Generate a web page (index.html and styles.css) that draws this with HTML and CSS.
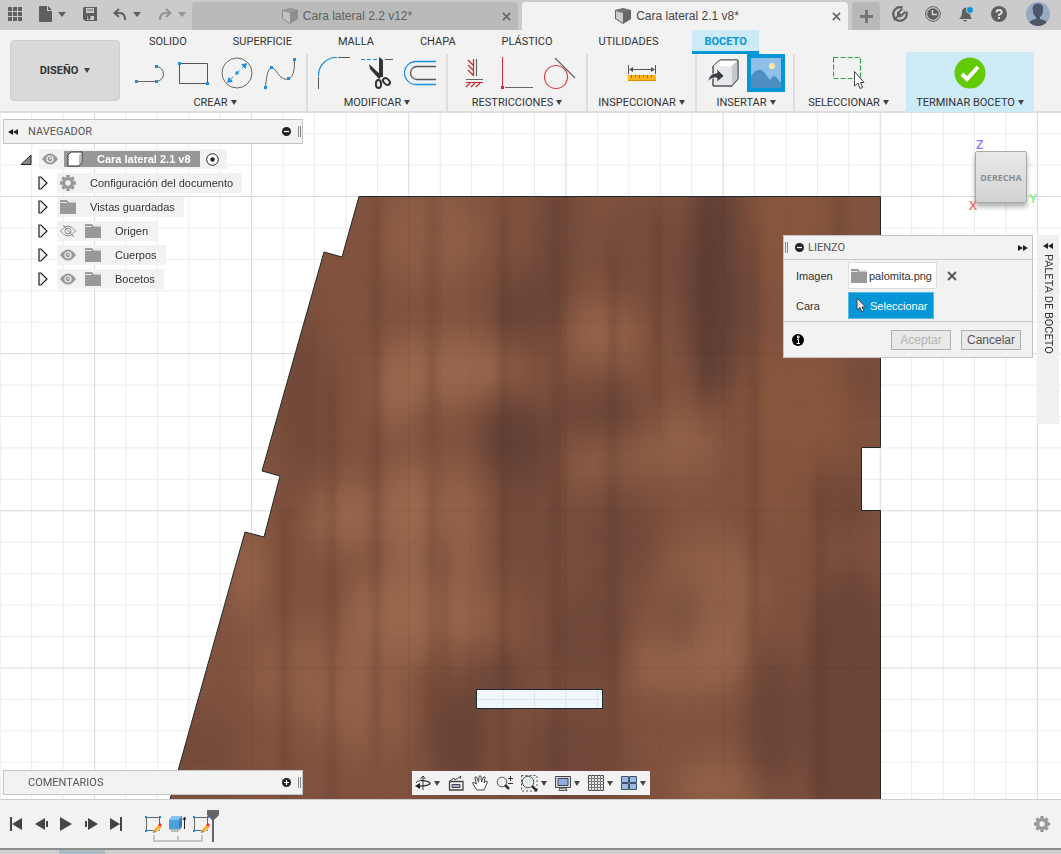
FILE: index.html
```html
<!DOCTYPE html>
<html lang="es">

<head>
    <meta charset="UTF-8">
    <meta name="viewport" content="width=device-width, initial-scale=1.0">
    <title>Cara lateral 2.1 v8*</title>
    <link rel="stylesheet" href="styles.css">
</head>

<body>
    <!-- Shared icons -->
    <svg class="sprite" width="0" height="0" aria-hidden="true">
        <symbol id="eye" viewBox="0 0 16 12">
            <path d="M0 6Q8-5 16 6Q8 17 0 6Z" fill="#999" />
            <circle cx="8" cy="6" r="3.6" fill="#f2f2f2" />
            <circle cx="8" cy="6" r="2.4" fill="#999" />
            <circle cx="8.500" cy="5.500" r="1" fill="#f2f2f2" />
        </symbol>
        <symbol id="folder" viewBox="0 0 16 14">
            <path d="M0 0h7l2 2.500h7V14H0Z" fill="#999" />
            <path d="M0 2.500h7M8 1h8" stroke="#e4e4e4" />
        </symbol>
        <symbol id="gear" viewBox="-8 -8 16 16">
            <circle r="4.400" fill="none" stroke="#999" stroke-width="3.400" />
            <path d="M0-8V-5M0 5V8M-8 0H-5M5 0H8M-5.600-5.600L-3.800-3.800M5.600-5.600L3.800-3.800M-5.600 5.600L-3.800 3.800M5.600 5.600L3.800 3.800" stroke="#999" stroke-width="3.400" />
        </symbol>
        <symbol id="expand" viewBox="0 0 10 14">
            <path d="M1 1h2l6 6l-6 6H1Z" fill="#eee" stroke="#222" stroke-width="1.200" />
        </symbol>
        <symbol id="cross" viewBox="0 0 10 10">
            <path d="M1 1L9 9M9 1L1 9" stroke="currentColor" stroke-width="1.800" />
        </symbol>
        <symbol id="rewind" viewBox="0 0 10 6">
            <path d="M5 0V6L0 3ZM10 0V6L5 3Z" fill="#222" />
        </symbol>
        <symbol id="sketch" viewBox="0 0 17 17">
            <path d="M1.500 1.500H14.500V14.500H1.500Z" fill="none" stroke="#666" />
            <path d="M0 0h2v2H0ZM14 0h2v2h-2ZM0 14h2v2H0Z" fill="#1b8fe0" />
            <path d="M8 17l1-4l5-5l3 3l-5 5Z" fill="#f7b63d" stroke="#f2f2f2" stroke-width=".6" />
            <path d="M13 9l2-2l2 2l-1.500 2Z" fill="#e6394a" />
            <path d="M8 17l1-3l2 2Z" fill="#777" />
        </symbol>
        <symbol id="part" viewBox="0 0 16 16">
            <path d="M0 2L8 0L16 2V11L8 16L0 11Z" fill="#666" />
            <path d="M1 3L8 5V15L1 10.500Z" fill="#ccc" />
            <path d="M1 2.500L8 .5L15 2.500L8 4.500Z" fill="#777" />
        </symbol>
    </svg>

    <header class="topbar">
        <div class="quick">
            <button class="icon-btn" aria-label="Panel de datos">
                <svg width="14" height="14" fill="#5f5f5f"><path d="M0 0h4v4H0ZM5 0h4v4H5ZM10 0h4v4h-4ZM0 5h4v4H0ZM5 5h4v4H5ZM10 5h4v4h-4ZM0 10h4v4H0ZM5 10h4v4H5ZM10 10h4v4h-4Z" /></svg>
            </button>
            <button class="icon-btn" aria-label="Archivo">
                <svg width="13" height="16" fill="#5f5f5f"><path d="M1 0h7v5h5v10a1 1 0 0 1-1 1H1a1 1 0 0 1-1-1V1a1 1 0 0 1 1-1ZM9 0l4 4H9Z" /></svg>
                <span class="caret"></span>
            </button>
            <button class="icon-btn" aria-label="Guardar">
                <svg width="14" height="14"><path d="M1 0H14V14H2L0 12V1Z" fill="#5f5f5f" /><path d="M3 1h8v5H3ZM4 9h7v4H4Z" fill="#cbcbcb" /><path d="M4 3h6M5 9h2v3H5Z" stroke="#5f5f5f" fill="#5f5f5f" /></svg>
            </button>
            <button class="icon-btn" aria-label="Deshacer">
                <svg width="14" height="13" fill="none" stroke="#5f5f5f" stroke-width="2"><path d="M6 1L1.500 5L6 9M2 5h5q5 0 5 7" /></svg>
                <span class="caret"></span>
            </button>
            <button class="icon-btn faded" aria-label="Rehacer">
                <svg width="14" height="13" fill="none" stroke="#5f5f5f" stroke-width="2"><path d="M8 1l4.500 4L8 9M12 5H7Q2 5 2 12" /></svg>
                <span class="caret"></span>
            </button>
        </div>
        <nav class="docs">
            <div class="doc">
                <a href="#doc22"><svg class="faded" width="16" height="16"><use href="#part" /></svg>Cara lateral 2.2 v12*</a>
                <button class="close" aria-label="Cerrar 2.2"><svg width="9" height="9"><use href="#cross" /></svg></button>
            </div>
            <div class="doc active">
                <a href="#doc21"><svg width="16" height="16"><use href="#part" /></svg>Cara lateral 2.1 v8*</a>
                <button class="close" aria-label="Cerrar 2.1"><svg width="9" height="9"><use href="#cross" /></svg></button>
            </div>
            <button class="new-doc" aria-label="Nuevo"><svg width="13" height="13"><path d="M5 0h3v5h5v3H8v5H5V8H0V5h5Z" fill="#777" /></svg></button>
        </nav>
        <div class="account">
            <button class="icon-btn" aria-label="Extensiones">
                <svg width="16" height="16"><circle cx="8" cy="8" r="6.800" fill="none" stroke="#5f5f5f" stroke-width="2.200" /><path d="M1 13L5 10Q4 7 6 5L11 10Q8 12 6 11L3 15Z" fill="#5f5f5f" /><path d="M7 6l3-3M10 9l3-3" stroke="#5f5f5f" stroke-width="1.800" /><path d="M11 1l4 4" stroke="#cbcbcb" stroke-width="3" /></svg>
            </button>
            <button class="icon-btn" aria-label="Estado del trabajo">
                <svg width="16" height="16"><circle cx="8" cy="8" r="7.400" fill="none" stroke="#5f5f5f" /><circle cx="8" cy="8" r="5.800" fill="#5f5f5f" /><path d="M7.500 4v4.500H12" stroke="#d5d5d5" stroke-width="1.500" fill="none" /></svg>
            </button>
            <button class="icon-btn" aria-label="Notificaciones">
                <svg width="16" height="16"><path d="M1 13q3-2 3-7q0-4 4-4.500q4 .5 4 4.500q0 5 2 7ZM5 14h4q-2 3-4 0Z" fill="#5f5f5f" /><circle cx="12" cy="4" r="3.500" fill="#0696d7" stroke="#cbcbcb" /></svg>
            </button>
            <button class="icon-btn" aria-label="Ayuda">
                <svg width="16" height="16"><circle cx="8" cy="8" r="8" fill="#5f5f5f" /><path d="M5.500 6.500Q5.500 4 8 4Q10.700 4 10.700 6.200Q10.700 7.600 8 8.800V10M8 11v2" stroke="#e0e0e0" stroke-width="1.900" fill="none" /></svg>
            </button>
            <button class="icon-btn avatar" aria-label="Perfil">
                <svg width="24" height="24"><circle cx="12" cy="12" r="12" fill="#98a9c4" /><path d="M3 20q2-2 7-3v-2Q7 13 7 9Q5 2 12 1.500Q18 2 17 8Q17 13 14 15v2q5 1 7 3q-4 4-9 4T3 20Z" fill="#4b5668" /></svg>
            </button>
        </div>
    </header>

    <section class="ribbon">
        <button class="workspace">DISEÑO <span class="caret"></span></button>
        <div class="ribbon-main">
            <nav class="tabs">
                <a href="#solido">SOLIDO</a>
                <a href="#superficie">SUPERFICIE</a>
                <a href="#malla">MALLA</a>
                <a href="#chapa">CHAPA</a>
                <a href="#plastico">PLÁSTICO</a>
                <a href="#utilidades">UTILIDADES</a>
                <a href="#boceto" class="current">BOCETO</a>
            </nav>
            <div class="groups">
                <div class="group">
                    <div class="tools">
                        <button class="icon-btn" aria-label="Línea">
                            <svg width="32" height="32" fill="none"><path d="M2 24.500H21M21 9.500a7.500 7.500 0 0 1 0 15" stroke="#666" /><path d="M0 23h3v3H0ZM20 23h3v3h-3ZM20 8h3v3h-3Z" fill="#1b8fe0" /></svg>
                        </button>
                        <button class="icon-btn" aria-label="Rectángulo">
                            <svg width="32" height="32" fill="none"><path d="M1.500 6.500H29.500V26.500H1.500Z" stroke="#555" /><path d="M0 5h3v3H0ZM28 25h3v3h-3Z" fill="#1b8fe0" /></svg>
                        </button>
                        <button class="icon-btn" aria-label="Círculo">
                            <svg width="32" height="32" fill="none"><circle cx="16" cy="16" r="15" stroke="#666" /><path d="M8 24L24 8" stroke="#1b8fe0" stroke-dasharray="6 3" /><path d="M14.500 14.500h3v3h-3ZM6 26l1.500-6l4.500 4.500ZM26 6l-6 1.500l4.500 4.500Z" fill="#1b8fe0" /></svg>
                        </button>
                        <button class="icon-btn" aria-label="Spline">
                            <svg width="32" height="32" fill="none"><path d="M1.500 30Q3 11 7 11Q10 10 14 17Q20 24 25 22Q31 19 30.500 3" stroke="#666" /><path d="M0 29h3v3H0ZM6 9h3v3H6ZM23 20h3v3h-3ZM29 1h3v3h-3Z" fill="#1b8fe0" /></svg>
                        </button>
                    </div>
                    <button class="group-name">CREAR<span class="caret"></span></button>
                </div>
                <div class="group">
                    <div class="tools">
                        <button class="icon-btn" aria-label="Empalme">
                            <svg width="32" height="32" fill="none"><path d="M.5 19A18 18 0 0 1 19 .5" stroke="#1b8fe0" stroke-width="1.200" /><path d="M20 .5H32M.5 20V32" stroke="#555" /></svg>
                        </button>
                        <button class="icon-btn" aria-label="Recortar">
                            <svg width="32" height="32" fill="none"><path d="M0 2.500H18" stroke="#1b8fe0" stroke-dasharray="4 2" /><path d="M24 2.500H32" stroke="#555" /><path d="M8 7L21 19L18 22L9 12ZM18 0L22 3V20H18Z" fill="#333" /><ellipse cx="17.500" cy="27" rx="2.600" ry="4" stroke="#333" stroke-width="2" /><ellipse cx="25.500" cy="24.500" rx="2.600" ry="4" transform="rotate(-45 25.500 24.500)" stroke="#333" stroke-width="2" /></svg>
                        </button>
                        <button class="icon-btn" aria-label="Desfase">
                            <svg width="32" height="32" fill="none"><path d="M32 4.500H12a11.500 11.500 0 0 0 0 23H32" stroke="#1b8fe0" stroke-width="1.300" /><path d="M32 9.500H13a6.500 6.500 0 0 0 0 13H32" stroke="#555" stroke-width="1.300" /></svg>
                        </button>
                    </div>
                    <button class="group-name">MODIFICAR<span class="caret"></span></button>
                </div>
                <div class="group">
                    <div class="tools">
                        <button class="icon-btn" aria-label="Horizontal o vertical">
                            <svg width="32" height="32" fill="none"><path d="M15.500 2V19M10 3l5 5M10 8l5 5M10 13l5 5M8 25.500H25M8 30l4-4M13 30l4-4M18 30l4-4" stroke="#c3272e" stroke-width="1.200" /><path d="M18.500 2V19M8 22.500H25" stroke="#666" stroke-width="1.200" /></svg>
                        </button>
                        <button class="icon-btn" aria-label="Perpendicular">
                            <svg width="32" height="32" fill="none"><path d="M1.500 0V29" stroke="#d32b33" /><path d="M4 30.500H32" stroke="#666" /><path d="M0 29h3v3H0Z" fill="#d32b33" /></svg>
                        </button>
                        <button class="icon-btn" aria-label="Tangente">
                            <svg width="32" height="32" fill="none"><circle cx="12" cy="20" r="11.500" stroke="#d84449" stroke-width="1.200" /><path d="M11 1L31 21" stroke="#666" stroke-width="1.200" /></svg>
                        </button>
                    </div>
                    <button class="group-name">RESTRICCIONES<span class="caret"></span></button>
                </div>
                <div class="group">
                    <div class="tools">
                        <button class="icon-btn" aria-label="Medir">
                            <svg width="28" height="32"><path d="M.5 8V17M27.500 8V17M2 12.500H26" stroke="#555" /><path d="M1 12.500l4-2.500v5ZM27 12.500l-4-2.500v5Z" fill="#555" /><path d="M0 18H28V24H0Z" fill="#fdb515" /><path d="M0 23.500H28" stroke="#dc9100" /><path d="M3.500 18v3M7.500 18v2M11.500 18v3M15.500 18v2M19.500 18v3M23.500 18v2" stroke="#8f6518" /></svg>
                        </button>
                    </div>
                    <button class="group-name">INSPECCIONAR<span class="caret"></span></button>
                </div>
                <div class="group insert">
                    <div class="tools">
                        <button class="icon-btn" aria-label="Insertar">
                            <svg width="32" height="32"><path d="M5 9L12 3H30V22L24 29H5Z" fill="#e6e8eb" stroke="#555" /><path d="M5 9L12 3H30L24 9Z" fill="#fff" /><path d="M24 9V29L30 22V3Z" fill="#c4c8ce" /><path d="M5 9L12 3H30V22L24 29H5Z" fill="none" stroke="#555" /><path d="M0 25Q1 16 9 16V12L16 19L9 25V21Q3 20 0 25Z" fill="#3b3f43" stroke="#f2f2f2" stroke-width=".7" /></svg>
                        </button>
                        <button class="icon-btn canvas-tool" aria-label="Lienzo">
                            <svg width="30" height="30"><path d="M0 0H30V30H0Z" fill="#8fc0e8" /><path d="M0 18Q7 8 13 14L19 22Q23 15 26 20L30 25V30H0Z" fill="#4d8fc2" /><circle cx="21" cy="8" r="3" fill="#ffe9a0" /></svg>
                        </button>
                    </div>
                    <button class="group-name">INSERTAR<span class="caret"></span></button>
                </div>
                <div class="group">
                    <div class="tools">
                        <button class="icon-btn" aria-label="Seleccionar">
                            <svg width="32" height="32" fill="none"><path d="M.5 .5H27.500V21.500H.5Z" stroke="#27a74a" stroke-width="1.200" stroke-dasharray="5 2" /><path d="M21.500 14.500V29L25 26L27 31.500L29.500 30.500L27.500 25.500H31Z" fill="#fff" stroke="#444" /></svg>
                        </button>
                    </div>
                    <button class="group-name">SELECCIONAR<span class="caret"></span></button>
                </div>
                <div class="group finish">
                    <div class="tools">
                        <button class="icon-btn" aria-label="Terminar">
                            <svg width="32" height="32" fill="none"><circle cx="16" cy="16" r="15.500" fill="#63ca06" /><path d="M8 17L13 22L24 10" stroke="#fff" stroke-width="4" /></svg>
                        </button>
                    </div>
                    <button class="group-name">TERMINAR BOCETO<span class="caret"></span></button>
                </div>
            </div>
        </div>
    </section>

    <main class="viewport">
        <!-- Model: wooden side panel over the sketch grid -->
        <svg class="model" width="100%" height="100%">
            <defs>
                <pattern id="minor" x="94" y="83" width="31.430" height="31.430" patternUnits="userSpaceOnUse">
                    <path d="M.5 0V32M0 .5H32" stroke="#000" stroke-opacity=".08" />
                </pattern>
                <pattern id="major" x="94" y="83" width="157.150" height="157.150" patternUnits="userSpaceOnUse">
                    <path d="M.5 0V158M0 .5H158" stroke="#000" stroke-opacity=".08" />
                </pattern>
                <clipPath id="outline">
                    <path d="M359 83H880V334H861V397H880V1132H45L245 419L264 424L280 363L262 358L324 139L342 144Z" />
                </clipPath>
                <filter id="soft" x="-50%" y="-50%" width="200%" height="200%" color-interpolation-filters="sRGB">
                    <feGaussianBlur stdDeviation="12 20" />
                </filter>
                <filter id="grainSoft" x="-50%" y="-5%" width="200%" height="110%" color-interpolation-filters="sRGB">
                    <feGaussianBlur stdDeviation="4 18" />
                </filter>
            </defs>
            <rect width="100%" height="100%" fill="url(#minor)" />
            <rect width="100%" height="100%" fill="url(#major)" />
            <g clip-path="url(#outline)">
                <rect class="wood" width="900" height="1140" />
                <g class="light" filter="url(#soft)">
                    <ellipse cx="430" cy="122" rx="55" ry="50" opacity=".5" />
                    <ellipse cx="450" cy="257" rx="75" ry="32" />
                    <ellipse cx="397" cy="272" rx="25" ry="40" />
                    <ellipse cx="604" cy="220" rx="40" ry="32" opacity=".8" />
                    <ellipse cx="344" cy="403" rx="35" ry="32" />
                    <ellipse cx="410" cy="400" rx="30" ry="50" />
                    <ellipse cx="462" cy="405" rx="20" ry="60" opacity=".7" />
                    <ellipse cx="410" cy="500" rx="65" ry="45" />
                    <ellipse cx="485" cy="515" rx="30" ry="50" opacity=".4" />
                    <ellipse cx="680" cy="330" rx="40" ry="35" opacity=".6" />
                    <ellipse cx="610" cy="350" rx="45" ry="30" opacity=".6" />
                    <ellipse cx="710" cy="480" rx="55" ry="60" opacity=".6" />
                    <ellipse cx="690" cy="550" rx="70" ry="28" opacity=".9" />
                    <ellipse cx="315" cy="560" rx="70" ry="50" opacity=".5" />
                    <ellipse cx="363" cy="595" rx="50" ry="50" opacity=".5" />
                    <ellipse cx="722" cy="675" rx="50" ry="28" opacity=".7" />
                    <ellipse cx="247" cy="460" rx="20" ry="50" opacity=".7" />
                </g>
                <g class="rust" filter="url(#soft)">
                    <ellipse cx="790" cy="105" rx="35" ry="70" />
                    <ellipse cx="800" cy="290" rx="55" ry="55" />
                    <ellipse cx="795" cy="370" rx="45" ry="60" opacity=".5" />
                </g>
                <g class="dark" filter="url(#soft)">
                    <ellipse cx="717" cy="95" rx="24" ry="35" />
                    <ellipse cx="715" cy="185" rx="30" ry="100" />
                    <ellipse cx="650" cy="140" rx="55" ry="60" opacity=".3" />
                    <ellipse cx="525" cy="195" rx="35" ry="38" opacity=".7" />
                    <ellipse cx="558" cy="120" rx="25" ry="80" opacity=".5" />
                    <ellipse cx="515" cy="325" rx="38" ry="40" opacity=".9" />
                    <ellipse cx="600" cy="300" rx="50" ry="25" opacity=".7" />
                    <ellipse cx="302" cy="285" rx="25" ry="90" opacity=".5" />
                    <ellipse cx="535" cy="410" rx="35" ry="75" opacity=".4" />
                    <ellipse cx="617" cy="420" rx="40" ry="60" opacity=".45" />
                    <ellipse cx="586" cy="525" rx="45" ry="55" opacity=".5" />
                    <ellipse cx="680" cy="502" rx="18" ry="35" opacity=".5" />
                    <ellipse cx="500" cy="562" rx="38" ry="16" />
                    <ellipse cx="460" cy="630" rx="32" ry="55" opacity=".8" />
                    <ellipse cx="570" cy="650" rx="60" ry="60" opacity=".5" />
                    <ellipse cx="770" cy="610" rx="25" ry="80" opacity=".7" />
                    <ellipse cx="850" cy="600" rx="50" ry="150" opacity=".7" />
                    <ellipse cx="845" cy="390" rx="35" ry="28" opacity=".6" />
                    <ellipse cx="865" cy="265" rx="20" ry="28" opacity=".5" />
                    <ellipse cx="198" cy="640" rx="45" ry="40" opacity=".4" />
                </g>
                <g class="grain" filter="url(#grainSoft)">
                    <path d="M376 83V640M432 83V330M432 360V600M504 83V700M557 83V720M613 140V620M332 260V720M657 100V300M705 83V290M754 120V540M285 400V700M820 360V700M445 440V580M839 83V180" />
                </g>
                <g opacity=".35">
                    <rect width="100%" height="100%" fill="url(#minor)" />
                    <rect width="100%" height="100%" fill="url(#major)" />
                </g>
            </g>
            <path class="edge" d="M359 83.500H880.500V334.500H861.500V397.500H880.500V1132H45L245 419L264 424L280 363L262 358L324 139L342 144Z" />
            <rect class="slot" x="476.500" y="576.500" width="126" height="19" />
            <rect x="477" y="577" width="125" height="18" fill="url(#minor)" />
        </svg>

        <div class="browser">
            <section>
                <header class="panel-head">
                    <button class="icon-btn" aria-label="Contraer navegador"><svg width="10" height="6"><use href="#rewind" /></svg></button>
                    <h2>NAVEGADOR</h2>
                    <button class="icon-btn dot" aria-label="Minimizar navegador"><svg width="9" height="9"><circle cx="4.500" cy="4.500" r="4.500" fill="#222" /><path d="M2 4.500h5" stroke="#fff" stroke-width="1.300" /></svg></button>
                    <span class="grip"></span>
                </header>
                <ul class="tree">
                    <li class="root">
                        <svg width="12" height="11"><path d="M11 1V10.500H1Z" fill="#888" stroke="#222" /></svg>
                        <span class="node">
                            <svg width="16" height="12"><use href="#eye" /></svg>
                            <span class="selected">
                                <svg width="16" height="16"><path d="M1 4L4 1H15V11L12 15H1Z" fill="#fff" stroke="#333" /><path d="M12 4.500L14.500 2V11L12 14Z" fill="#bbb" /></svg>
                                Cara lateral 2.1 v8
                            </span>
                            <svg width="13" height="13"><circle cx="6.500" cy="6.500" r="5.800" fill="#fff" stroke="#222" /><circle cx="6.500" cy="6.500" r="2.200" fill="#222" /></svg>
                        </span>
                    </li>
                    <li>
                        <svg width="10" height="14"><use href="#expand" /></svg>
                        <span class="node"><svg width="16" height="16"><use href="#gear" /></svg><span class="name">Configuración del documento</span></span>
                    </li>
                    <li>
                        <svg width="10" height="14"><use href="#expand" /></svg>
                        <span class="node"><svg width="16" height="14"><use href="#folder" /></svg><span class="name">Vistas guardadas</span></span>
                    </li>
                    <li>
                        <svg width="10" height="14"><use href="#expand" /></svg>
                        <span class="node"><svg width="16" height="12" fill="none" stroke="#888"><path d="M.5 6Q8-4 15.500 6Q8 16 .5 6ZM3 0L14 12" /><circle cx="8" cy="6" r="3" /></svg><svg width="16" height="14"><use href="#folder" /></svg><span class="name">Origen</span></span>
                    </li>
                    <li>
                        <svg width="10" height="14"><use href="#expand" /></svg>
                        <span class="node"><svg width="16" height="12"><use href="#eye" /></svg><svg width="16" height="14"><use href="#folder" /></svg><span class="name">Cuerpos</span></span>
                    </li>
                    <li>
                        <svg width="10" height="14"><use href="#expand" /></svg>
                        <span class="node"><svg width="16" height="12"><use href="#eye" /></svg><svg width="16" height="14"><use href="#folder" /></svg><span class="name">Bocetos</span></span>
                    </li>
                </ul>
            </section>
            <header class="panel-head comments">
                <h2>COMENTARIOS</h2>
                <button class="icon-btn dot" aria-label="Mostrar comentarios"><svg width="9" height="9"><circle cx="4.500" cy="4.500" r="4.500" fill="#222" /><path d="M2 4.500h5M4.500 2v5" stroke="#fff" stroke-width="1.200" /></svg></button>
                <span class="grip"></span>
            </header>
        </div>

        <div class="viewcube">
            <span class="axis axis-z">Z</span>
            <span class="axis axis-y">Y</span>
            <button class="face">DERECHA</button>
            <span class="axis axis-x">X</span>
        </div>

        <form class="dialog">
            <header class="dialog-head">
                <span class="grip"></span>
                <svg width="9" height="9"><circle cx="4.500" cy="4.500" r="4.500" fill="#222" /><path d="M2 4.500h5" stroke="#fff" stroke-width="1.300" /></svg>
                <h2>LIENZO</h2>
                <button type="button" class="icon-btn" aria-label="Expandir"><svg class="flip" width="10" height="6"><use href="#rewind" /></svg></button>
            </header>
            <div class="fields">
                <div class="field">
                    <label for="imagen">Imagen</label>
                    <button type="button" id="imagen" class="file"><svg width="16" height="14"><use href="#folder" /></svg>palomita.png</button>
                    <button type="button" class="icon-btn clear" aria-label="Quitar imagen"><svg width="10" height="10"><use href="#cross" /></svg></button>
                </div>
                <div class="field">
                    <label for="cara">Cara</label>
                    <button type="button" id="cara" class="pick"><svg width="12" height="17"><path d="M2 1V13L5 10.500L7 15L9 14L7 10H10.500Z" fill="#eee" stroke="#444" /></svg>Seleccionar</button>
                </div>
            </div>
            <footer class="dialog-foot">
                <svg width="12" height="12"><circle cx="6" cy="6" r="6" fill="#000" /><path d="M5 5.500h1.500V9M4.500 9.500h3.500M5.500 2v2h1.500v-2Z" stroke="#fff" fill="none" /></svg>
                <button type="submit" class="btn" disabled>Aceptar</button>
                <button type="button" class="btn">Cancelar</button>
            </footer>
        </form>

        <aside class="palette">
            <button class="icon-btn" aria-label="Abrir paleta"><svg width="10" height="6"><use href="#rewind" /></svg></button>
            <span>PALETA DE BOCETO</span>
        </aside>

        <div class="navbar">
            <button class="icon-btn" aria-label="Órbita"><svg width="16" height="16" fill="none" stroke="#333"><path d="M8 15V2M5.500 4L8 1L10.500 4" /><path d="M6 5.500Q15 6 15 8.500Q14 11 4 11" stroke-width="1.500" /><path d="M6 5.500Q1 6 1 8" /><path d="M0 11l5-3v6Z" fill="#222" stroke="none" /></svg><span class="caret"></span></button>
            <button class="icon-btn" aria-label="Mirar a"><svg width="16" height="16" fill="none" stroke="#444"><path d="M1.500 6.500H15V15H1.500Z" stroke-width="1.300" /><path d="M4 9.500h8v3H4Z" fill="#aac" /><path d="M2 6L6 3L7 5L13 1L12 4" /></svg></button>
            <button class="icon-btn" aria-label="Encuadre"><svg width="16" height="16"><path d="M5 15L1 9Q0 7 2 7.500L4.500 9L3 3Q3 1 4.500 2L6.500 7L7 1.500Q8 0 9 1.500L9.500 7L11.500 2Q13 1 13 3L12 8L14 6Q16 6 15 8L12 15Z" fill="#fff" stroke="#444" /></svg></button>
            <button class="icon-btn" aria-label="Zoom"><svg width="17" height="16"><circle cx="6" cy="7" r="4.800" fill="#eef3f5" stroke="#555" /><path d="M9 10l4 4" stroke="#333" stroke-width="2.500" /><path d="M12 3.500h5M14.500 1v5M12 8.500h5" stroke="#333" /></svg></button>
            <button class="icon-btn" aria-label="Ajustar"><svg width="17" height="17"><path d="M.5 .5H16V16H.5Z" fill="none" stroke="#555" stroke-dasharray="2 2" /><circle cx="7" cy="7" r="5.800" fill="#e4eef0" stroke="#555" /><path d="M11 11l5 5" stroke="#333" stroke-width="2.500" /></svg><span class="caret"></span></button>
            <button class="icon-btn" aria-label="Visualización"><svg width="16" height="16"><path d="M.5 1.500H15.500V12.500H.5Z" fill="#ddd" stroke="#444" /><path d="M3 3.500h10v7H3Z" fill="#8fb0dd" stroke="#446" /><path d="M5 13h6l1 2.500H4Z" fill="#ccc" stroke="#555" /></svg><span class="caret"></span></button>
            <button class="icon-btn" aria-label="Rejilla"><svg width="16" height="16" fill="none"><path d="M.5 .5H15.500V15.500H.5Z" fill="#e6e6e6" stroke="#444" /><path d="M3.500 0V16M6.500 0V16M9.500 0V16M12.500 0V16M0 3.500H16M0 6.500H16M0 9.500H16M0 12.500H16" stroke="#777" /></svg><span class="caret"></span></button>
            <button class="icon-btn" aria-label="Ventanas"><svg width="16" height="14" fill="#9bb9df" stroke="#3f536e"><path d="M.5 .5h7v6h-7ZM8.500 .5h7v6h-7ZM.5 7.500h7v6h-7ZM8.500 7.500h7v6h-7Z" /></svg><span class="caret"></span></button>
        </div>
    </main>

    <footer class="timeline">
        <div class="playback">
            <button class="icon-btn" aria-label="Inicio"><svg width="13" height="14" fill="#444"><path d="M0 0h2v14H0ZM12 1V13L2 7Z" /></svg></button>
            <button class="icon-btn" aria-label="Anterior"><svg width="13" height="14" fill="#444"><path d="M10 1V13L0 7ZM11 4h2v6h-2Z" /></svg></button>
            <button class="icon-btn" aria-label="Reproducir"><svg width="13" height="14" fill="#444"><path d="M0 0V14L12 7Z" /></svg></button>
            <button class="icon-btn" aria-label="Siguiente"><svg width="13" height="14" fill="#444"><path d="M3 1V13L13 7ZM0 4h2v6H0Z" /></svg></button>
            <button class="icon-btn" aria-label="Final"><svg width="13" height="14" fill="#444"><path d="M10 0h2v14h-2ZM0 1V13L10 7Z" /></svg></button>
        </div>
        <div class="features">
            <button class="icon-btn" aria-label="Boceto 1"><svg width="17" height="17"><use href="#sketch" /></svg></button>
            <button class="icon-btn" aria-label="Extrusión"><svg width="17" height="17"><path d="M0 13L3 16H9L13 12V9H0Z" fill="#bbb" /><path d="M0 4L3 0H13V10L10 13H0Z" fill="#4d9fdb" /><path d="M0 4L3 0H13L10 4Z" fill="#85c4ee" /><path d="M10 4V13L13 10V0Z" fill="#2f7fbd" /><path d="M15.500 2V13M14 4l1.500-3L17 4" stroke="#222" fill="none" /></svg></button>
            <button class="icon-btn" aria-label="Boceto 2"><svg width="17" height="17"><use href="#sketch" /></svg></button>
            <svg class="bracket" width="50" height="8"><path d="M1 0V6H49V0M25 1V6" stroke="#c4c4c4" stroke-width="2" fill="none" /></svg>
            <svg class="marker" width="12" height="32"><path d="M0 0H12V5L7 10V32H5V10L0 5Z" fill="#666" /></svg>
        </div>
        <button class="icon-btn settings" aria-label="Configuración"><svg width="16" height="16"><use href="#gear" /></svg></button>
    </footer>
    <div class="backdrop"></div>
</body>

</html>
```

FILE: styles.css
```css
* {
    box-sizing: border-box;
}

body {
    margin: 0;
    height: 100vh;
    display: flex;
    flex-direction: column;
    overflow: hidden;
    font-family: "Liberation Sans", Arial, sans-serif;
    font-size: 11px;
    color: #333;
    background-color: #f2f2f2;
}

button {
    font: inherit;
    color: inherit;
    padding: 0;
    border: none;
    background: none;
    cursor: pointer;
}

a {
    color: inherit;
    text-decoration: none;
}

h2 {
    margin: 0;
    font-family: Roboto, sans-serif;
    font-size: 11px;
    font-weight: 400;
    color: #555;
}

svg {
    display: block;
    flex: none;
}

.sprite {
    position: absolute;
}

.icon-btn {
    display: flex;
    align-items: center;
    justify-content: center;
    gap: 6px;
}

.caret {
    border: 3px solid transparent;
    border-top: 5px solid #444;
    border-bottom: none;
}

.topbar .caret {
    border-width: 5px 4px 0;
    border-top-color: #5f5f5f;
}

.faded {
    opacity: 0.5;
}

/* Top bar */
.topbar {
    display: flex;
    height: 30px;
    background-color: #cbcbcb;
}

.quick {
    display: flex;
    align-items: center;
    justify-content: space-between;
    width: 192px;
    padding: 0 6px 2px 8px;
}

.docs {
    display: flex;
    flex: 1;
    gap: 4px;
    padding-top: 2px;
}

.doc {
    flex: 1;
    display: flex;
    align-items: center;
    padding-right: 7px;
    border-radius: 4px 4px 0 0;
    background-color: #bababa;
    font-size: 12px;
    color: #606060;
}

.doc a {
    flex: 1;
    display: flex;
    align-items: center;
    justify-content: center;
    gap: 5px;
}

.doc.active {
    background-color: #f2f2f2;
    color: #444;
}

.close {
    color: #666;
}

.new-doc {
    display: grid;
    place-items: center;
    width: 28px;
    border-radius: 4px 4px 0 0;
    background-color: #b8b8b8;
}

.account {
    display: flex;
    align-items: center;
    gap: 17px;
    padding: 0 11px 2px 12px;
}

.avatar {
    margin-left: 2px;
}

/* Ribbon */
.ribbon {
    display: flex;
    height: 83px;
    padding-left: 10px;
    border-bottom: 2px solid #dedede;
    font-family: Roboto, sans-serif;
}

.workspace {
    display: flex;
    align-items: center;
    justify-content: center;
    gap: 6px;
    width: 110px;
    height: 61px;
    margin: 10px 4px 0 0;
    border: 1px solid #cecece;
    border-radius: 4px;
    background-color: #d9d9d9;
    font-weight: 700;
}

.ribbon-main {
    flex: 1;
    display: flex;
    flex-direction: column;
}

.tabs {
    display: flex;
    gap: 22px;
    height: 24px;
    padding-left: 13px;
}

.tabs a {
    padding: 0 12px;
    line-height: 23px;
}

.tabs .current {
    border-bottom: 3px solid #0696d7;
    background-color: #cdeaf7;
    color: #0696d7;
    font-weight: 700;
}

.groups {
    flex: 1;
    display: flex;
    padding-right: 27px;
}

.group {
    width: 140px;
    display: flex;
    flex-direction: column;
    align-items: center;
    border-right: 2px solid #dedede;
}

.group:first-child {
    width: 184px;
}

.group:nth-child(4) {
    width: 109px;
}

.group.insert {
    width: 98px;
    padding-left: 2px;
}

.group:nth-child(6) {
    width: 107px;
    border: none;
}

.group.finish {
    width: 128px;
    margin-left: auto;
    margin-top: -2px;
    padding-top: 2px;
    border: none;
    background-color: #cdeaf7;
}

.tools {
    display: flex;
    align-items: center;
    gap: 11px;
    height: 38px;
}

.insert .tools {
    gap: 7px;
}

.canvas-tool {
    width: 38px;
    height: 38px;
    background-color: #0696d7;
}

.group-name {
    display: flex;
    align-items: center;
    gap: 3px;
    height: 20px;
    white-space: nowrap;
}

/* Viewport */
.viewport {
    flex: 1;
    min-height: 0;
    position: relative;
    display: flex;
    background-color: #fff;
}

.model {
    position: absolute;
    inset: 0;
}

.wood {
    fill: #81533f;
}

.light {
    fill: #9f6c50;
    opacity: 0.85;
}

.rust {
    fill: #8c583d;
    opacity: 0.7;
}

.dark {
    fill: #573932;
    opacity: 0.75;
}

.grain {
    fill: none;
    stroke: #4c3028;
    stroke-width: 6;
    opacity: 0.35;
}

.edge {
    fill: none;
    stroke: #1f2a2c;
}

.slot {
    fill: #f0f8fd;
    stroke: #1f2a2c;
}

.browser {
    position: relative;
    width: 300px;
    margin: 6px 0 4px 3px;
    display: flex;
    flex-direction: column;
    justify-content: space-between;
}

.panel-head {
    display: flex;
    align-items: center;
    height: 25px;
    padding: 0 1px 0 4px;
    border: 1px solid #c4c4c4;
    background-color: #f2f2f2;
}

.panel-head h2 {
    margin-left: 10px;
}

.comments h2 {
    margin-left: 20px;
}

.dot {
    margin-left: auto;
    margin-right: 7px;
}

.grip {
    width: 3px;
    height: 11px;
    border: 1px solid #888;
    border-width: 0 1px;
}

.tree {
    list-style: none;
    margin: 5px 0 0;
    padding: 0;
    display: flex;
    flex-direction: column;
    gap: 4px;
}

.tree li {
    display: flex;
    align-items: center;
    gap: 9px;
    padding-left: 35px;
}

.tree .root {
    gap: 7px;
    padding-left: 17px;
}

.node {
    display: flex;
    align-items: center;
    gap: 9px;
    height: 20px;
    padding: 0 9px 0 3px;
    background-color: #f2f2f2;
}

.root .node {
    gap: 6px;
    padding-right: 8px;
}

.name {
    margin-left: 5px;
}

.selected {
    display: flex;
    align-items: center;
    gap: 14px;
    height: 16px;
    padding: 0 9px 0 3px;
    background-color: #979797;
    color: #fff;
    font-weight: 700;
}

/* View cube */
.viewcube {
    position: absolute;
    top: 24px;
    right: 24px;
    width: 70px;
    height: 76px;
}

.face {
    position: absolute;
    top: 14px;
    left: 8px;
    width: 52px;
    height: 52px;
    border: 1px solid #a9a9a9;
    border-radius: 2px;
    background: linear-gradient(#e9e9e9, #d2d2d4);
    box-shadow: 0 4px 5px rgba(0, 0, 0, 0.3);
    font-family: "Noto Sans", sans-serif;
    font-size: 9px;
    font-weight: 700;
    color: #8b9096;
}

.axis {
    position: absolute;
    font-family: "Open Sans", sans-serif;
    font-size: 13px;
    line-height: 14px;
    font-weight: 600;
}

.axis-z {
    top: 0;
    left: 9px;
    color: #8080f5;
}

.axis-y {
    top: 54px;
    right: 0;
    color: #7fee7f;
}

.axis-x {
    top: 61px;
    left: 2px;
    color: #ee6a6a;
}

/* Canvas dialog */
.dialog {
    position: absolute;
    top: 122px;
    right: 28px;
    width: 250px;
    border: 1px solid #c4c4c4;
    background-color: #f2f2f2;
}

.dialog-head {
    display: flex;
    align-items: center;
    gap: 4px;
    height: 24px;
    padding: 0 4px 0 1px;
    border-bottom: 1px solid #c9c9c9;
}

.dialog-head .grip {
    margin-right: 3px;
}

.dialog-head .icon-btn {
    margin-left: auto;
}

.flip {
    transform: scaleX(-1);
}

.fields {
    display: flex;
    flex-direction: column;
    gap: 3px;
    padding: 2px 12px;
    border-bottom: 1px solid #c9c9c9;
}

.field {
    display: flex;
    align-items: center;
}

.field label {
    width: 52px;
}

.file,
.pick {
    display: flex;
    align-items: center;
    height: 27px;
    border: 1px solid #ddd;
    padding: 0 4px 0 2px;
    gap: 2px;
    background-color: #fff;
}

.pick {
    padding: 0 6px;
    gap: 3px;
    border-color: #58b8e5;
    background-color: #0696d7;
    color: #fff;
}

.clear {
    margin-left: 10px;
    color: #555;
}

.dialog-foot {
    display: flex;
    align-items: center;
    gap: 10px;
    height: 35px;
    padding: 0 11px 0 8px;
}

.btn {
    height: 20px;
    width: 60px;
    border: 1px solid #b0b0b0;
    background-color: #e9e9e9;
    font-size: 12px;
    color: #555;
}

.btn:disabled {
    margin-left: auto;
    color: #b3b3b3;
}

.palette {
    position: absolute;
    top: 122px;
    right: 2px;
    width: 22px;
    height: 189px;
    display: flex;
    flex-direction: column;
    align-items: center;
    gap: 5px;
    padding-top: 8px;
    background-color: #f0f0f0;
    font-family: Roboto, sans-serif;
    font-size: 11px;
}

.palette span {
    writing-mode: vertical-rl;
}

.navbar {
    position: absolute;
    bottom: 4px;
    left: 50%;
    transform: translateX(-50%);
    display: flex;
    align-items: center;
    gap: 8px;
    height: 24px;
    padding: 0 4px 0 3px;
    background-color: #f2f2f2;
}

.navbar .icon-btn {
    gap: 3px;
}

/* Timeline */
.timeline {
    display: flex;
    align-items: center;
    height: 49px;
    padding: 0 11px 0 10px;
    border-top: 1px solid #ccc;
    background-color: #f2f2f2;
}

.playback {
    display: flex;
    gap: 12px;
}

.features {
    position: relative;
    display: flex;
    gap: 7px;
    margin-left: 22px;
}

.bracket {
    position: absolute;
    top: 19px;
    left: 8px;
}

.marker {
    position: absolute;
    top: -6px;
    right: -9px;
}

.settings {
    margin-left: auto;
}

.backdrop {
    height: 6px;
    border-top: 2px solid #8c8c8c;
    background: linear-gradient(90deg, #d0d0d0 59px, #a9bcc4 59px, #a9bcc4 105px, #cfcfcf 105px);
}
```
